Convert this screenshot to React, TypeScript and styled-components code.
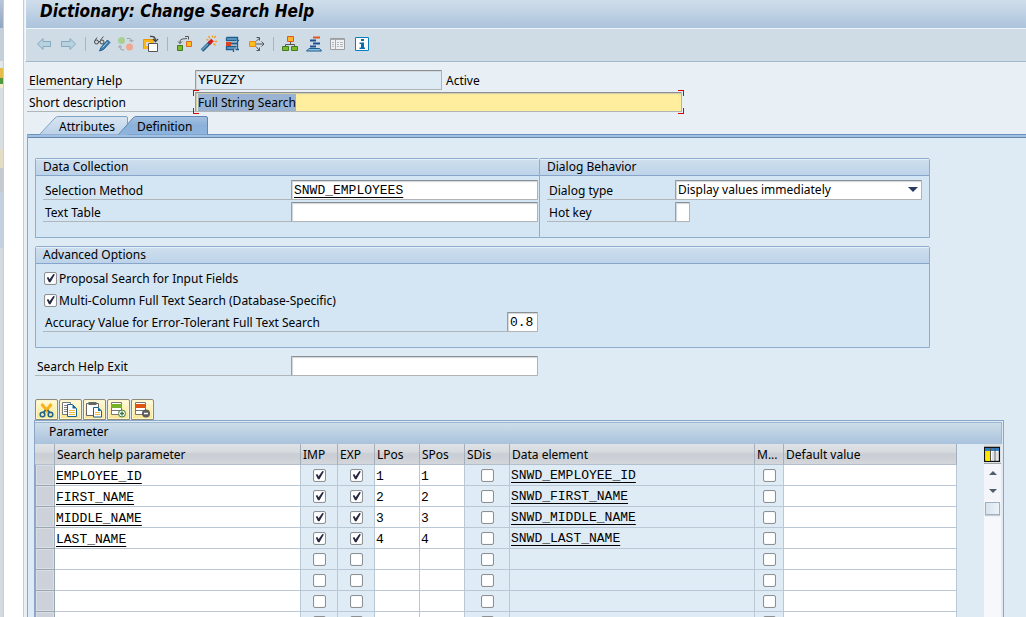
import React, { useEffect, useRef } from "react";
import styled, { createGlobalStyle, css } from "styled-components";

const UI_FONT = '"Noto Sans", "Open Sans", sans-serif';
const MONO_FONT = '"Liberation Mono", "DejaVu Sans Mono", monospace';

const GlobalStyle = createGlobalStyle`
  *, *::before, *::after { box-sizing: border-box; }
  body {
    margin: 0;
    background: #ffffff;
    color: #000000;
    font-family: ${UI_FONT};
    font-size: 12px;
    line-height: 16px;
  }
  button, input, select { font: inherit; color: inherit; }
`;

/* ---------- window frame ---------- */

const Desktop = styled.div`
  display: flex;
  height: 100vh;
  overflow: hidden;
`;

const BackWindow = styled.div`
  flex: 0 0 4px;
  display: flex;
  flex-direction: column;
  background: #d3dae0;
  border-right: 1px solid #c9ced6;
`;

const BackStrip = styled.div<{ $h: number; $bg: string }>`
  flex: 0 0 ${(p) => p.$h}px;
  background: ${(p) => p.$bg};
`;

const Window = styled.div`
  flex: 1;
  min-width: 0;
  display: flex;
  flex-direction: column;
  margin-left: 19px;
  border-left: 1px solid #c6cbd9;
  padding-left: 1px;
  background: #e8eff5;
`;

const TitleBar = styled.header`
  flex: 0 0 29px;
  padding-left: 14px;
  background: linear-gradient(#d0deeb, #abc3dc);
  border-left: 1px solid #f5f9fc;
  border-bottom: 1px solid #eef4f9;
`;

const Title = styled.h1`
  margin: 0;
  font-family: "DejaVu Sans Condensed", "DejaVu Sans", sans-serif;
  font-size: 17px;
  line-height: 22px;
  font-weight: bold;
  font-style: italic;
  white-space: nowrap;
`;

const Toolbar = styled.div`
  flex: 0 0 33px;
  display: flex;
  align-items: center;
  gap: 6px;
  padding: 0 0 3px 10px;
  background: #cfdce6;
  border-left: 1px solid #f5f9fc;
  border-bottom: 1px solid #a3b9c9;
`;

const ToolButton = styled.button`
  width: 18px;
  height: 18px;
  padding: 0;
  border: 0;
  background: none;

  svg { display: block; }
`;

const Separator = styled.span`
  width: 1px;
  height: 14px;
  margin: 0 2px 0 1px;
  background: #9db8cd;
`;

/* ---------- form parts ---------- */

const HeaderForm = styled.div`
  display: flex;
  flex-direction: column;
  gap: 2px;
  padding: 8px 0 4px 2px;
`;

const Row = styled.div<{ $width?: number }>`
  display: flex;
  align-items: stretch;
  height: 20px;
  ${(p) => p.$width && css`width: ${p.$width}px;`}
`;

const Label = styled.label<{ $width?: number }>`
  ${(p) => (p.$width ? css`flex: 0 0 ${p.$width}px;` : css`flex: 1;`)}
  padding: 3px 0 0 2px;
  border-bottom: 1px solid #b0b6ba;
  white-space: nowrap;
`;

const sunken = css`
  border: 1px solid #b0b4b6;
  border-top-color: #8b9094;
  border-left-color: #9a9ea2;
  border-radius: 1px;
  box-shadow: inset 1px 1px 1px #d2d5d8;
`;

const Field = styled.input<{ $width?: number; $mono?: boolean; $link?: boolean }>`
  ${sunken}
  ${(p) => (p.$width ? css`flex: 0 0 ${p.$width}px;` : css`flex: 1;`)}
  min-width: 0;
  width: ${(p) => (p.$width ? `${p.$width}px` : "auto")};
  height: 20px;
  padding: 0 2px;
  background: #ffffff;
  outline: 0;
  ${(p) => p.$mono && css`font-family: ${MONO_FONT}; font-size: 13px;`}
  ${(p) => p.$link && css`text-decoration: underline; text-underline-offset: 3px;`}

  &:read-only { background: #dfebf4; }
`;

const FocusFrame = styled.span`
  position: relative;
  flex: 0 0 487px;
  display: flex;

  input {
    background: #ffee9e;
    box-shadow: inset 1px 1px 1px #cfc9a8;
  }
  input::selection { background: #9ab3d2; color: #000000; }
`;

const Corner = styled.i<{ $v: "top" | "bottom"; $h: "left" | "right" }>`
  position: absolute;
  width: 6px;
  height: 6px;
  ${(p) => p.$v}: -2px;
  ${(p) => p.$h}: -2px;
  border: 0 solid #dd0000;
  border-${(p) => p.$v}-width: 1px;
  border-${(p) => p.$h}-width: 1px;
`;

const Status = styled.span`
  padding: 3px 0 0 4px;
`;

const SelectBox = styled.div`
  position: relative;
  flex: 1;
  display: flex;

  &::after {
    content: "";
    position: absolute;
    right: 4px;
    top: 7px;
    border: 5px solid transparent;
    border-top-color: #2b3c62;
    border-bottom: 0;
    pointer-events: none;
  }
`;

const Select = styled.select`
  ${sunken}
  appearance: none;
  flex: 1;
  height: 20px;
  padding: 0 2px;
  background: #ffffff;
  outline: 0;
`;

const Tick = styled.input.attrs({ type: "checkbox" })`
  appearance: none;
  display: block;
  flex: 0 0 13px;
  width: 13px;
  height: 13px;
  margin: 0;
  border: 1px solid #8e9194;
  border-radius: 2px;
  background: #ffffff;
  box-shadow: inset 0 0 1px #b9bcc0;

  &:checked::before {
    content: "";
    display: block;
    width: 11px;
    height: 11px;
    background: #26293f;
    clip-path: polygon(16% 48%, 30% 42%, 42% 62%, 76% 14%, 90% 18%, 50% 88%, 36% 88%);
  }
`;

const TickLabel = styled.label`
  display: flex;
  align-items: center;
  gap: 2px;
  height: 20px;
  padding-left: 1px;
  white-space: nowrap;
`;

const TickText = styled.span`
  padding-top: 1px;
`;

/* ---------- tabs ---------- */

const TabList = styled.div`
  display: flex;
  height: 18px;
  padding-left: 14px;
`;

const Tab = styled.button<{ $active?: boolean }>`
  position: relative;
  z-index: ${(p) => (p.$active ? 1 : 0)};
  width: 90px;
  height: 19px;
  margin-left: ${(p) => (p.$active ? "-11px" : "0")};
  padding: 2px 0 0 ${(p) => (p.$active ? 19 : 20)}px;
  border: 0;
  background: none;
  text-align: left;
  line-height: 16px;
`;

const TabShape = styled.svg`
  position: absolute;
  inset: 0;
  z-index: -1;
`;

const TabPanel = styled.main`
  flex: 1;
  min-height: 0;
  margin-left: 2px;
  border-left: 1px solid #8aa7c7;
  background: #dfebf4;
`;

const TabEdge = styled.div`
  height: 4px;
  background: #a3c2e3;
  border-top: 1px solid #6a92bf;
  border-bottom: 1px solid #6487b0;
`;

const PanelBody = styled.div`
  display: flex;
  flex-direction: column;
  padding: 20px 22px 0 7px;
`;

/* ---------- group boxes ---------- */

const GroupRow = styled.div`
  display: grid;
  grid-template-columns: 504px 1fr;
  margin: 0 74px 8px 0;
`;

const Group = styled.section<{ $open?: boolean; $wide?: boolean }>`
  ${(p) => p.$wide && css`grid-column: 1 / -1;`}
  border: 1px solid #8eadcd;
  border-right-width: ${(p) => (p.$open ? 0 : 1)}px;
  border-radius: 2px 2px 0 0;
  background: #d4e5f3;
`;

const GroupTitle = styled.h2`
  height: 17px;
  margin: 0;
  padding-left: 7px;
  font-size: 12px;
  font-weight: normal;
  line-height: 16px;
  background: linear-gradient(#cfdfee, #bdd3e9);
  border-bottom: 1px solid #86a5c8;
  box-shadow: inset 0 1px 0 #e4eef7;
`;

const GroupBody = styled.div`
  display: flex;
  flex-direction: column;
  gap: 2px;
  padding: 4px 7px 15px;
`;

/* ---------- parameter table ---------- */

const GridTools = styled.div`
  display: flex;
  gap: 1px;
  margin-top: 23px;
`;

const GridButton = styled.button`
  width: 23px;
  height: 21px;
  padding: 0 0 0 2px;
  border: 1px solid #8d8a78;
  border-radius: 2px 2px 0 0;
  background: linear-gradient(#fffbe0, #fdf0b0 50%, #f8e38e);
  box-shadow: inset 0 0 0 1px #fff6cc;

  svg { display: block; }
`;

const GridFrame = styled.section`
  margin-left: -1px;
  padding: 1px 1px 0 0;
  border: 1px solid #89a6c9;
  border-bottom: 0;
`;

const GridTitle = styled.h2`
  height: 22px;
  margin: 0;
  padding-left: 14px;
  font-size: 12px;
  font-weight: normal;
  line-height: 18px;
  border: 1px solid #9db6d0;
  border-width: 1px 1px 0 0;
  background: linear-gradient(#cddde9, #a9c2dc);
`;

const GridBody = styled.div`
  display: flex;
`;

const Table = styled.table`
  flex: 1;
  min-width: 0;
  margin-right: 27px;
  table-layout: fixed;
  border-collapse: separate;
  border-spacing: 0;
`;

const HeadCell = styled.th`
  height: 21px;
  padding: 2px 0 0 2px;
  overflow: hidden;
  border-right: 1px solid #a3afbd;
  border-bottom: 1px solid #b3bfcc;
  background: linear-gradient(#dfe3e6, #d6dade 40%, #c9cdd4 50%, #d3d7db);
  font-weight: normal;
  text-align: left;
  white-space: nowrap;
`;

const Cell = styled.td<{ $white?: boolean }>`
  height: 21px;
  padding: 0 0 0 1px;
  overflow: hidden;
  border-right: 1px solid #bac7d5;
  border-bottom: 1px solid #bac7d5;
  background: ${(p) => (p.$white ? "#ffffff" : "#dfebf5")};
  font-family: ${MONO_FONT};
  font-size: 13px;
  line-height: 18px;
  white-space: nowrap;

  ${Tick} { margin: 0 auto; }
`;

const SelectorCell = styled.td`
  height: 21px;
  padding: 0;
  border: 1px solid #9ba6b3;
  border-width: 0 1px 1px 1px;
  background: #cdd1d9;
  box-shadow: inset 0 0 0 1px #dadee3;
`;

const CellInput = styled.input<{ $link?: boolean }>`
  display: block;
  width: 100%;
  height: 20px;
  padding: 2px 0 0;
  border: 0;
  outline: 0;
  background: transparent;
  text-decoration: ${(p) => (p.$link ? "underline" : "none")};
  text-underline-offset: 3px;
`;

const CellLink = styled.a`
  display: block;
  height: 20px;
  padding-top: 2px;
  color: inherit;
  text-underline-offset: 3px;
`;

const ScrollColumn = styled.div`
  flex: 0 0 18px;
  display: flex;
  flex-direction: column;
  background: #f6f8fb;
  border-right: 1px solid #e6ebf1;
`;

const SettingsButton = styled.button`
  height: 20px;
  padding: 1px 0 0 0;
  border: 0;
  border-bottom: 1px solid #9fa5ab;
  background: #dcdfe2;

  svg { display: block; }
`;

const ScrollArrow = styled.button<{ $up?: boolean }>`
  display: flex;
  justify-content: center;
  align-items: center;
  height: 18px;
  padding: 0;
  border: 0;
  background: #f3f5fa;

  &::before {
    content: "";
    border: 4px solid transparent;
    ${(p) =>
      p.$up
        ? css`border-top: 0; border-bottom-color: #4e5e6b;`
        : css`border-bottom: 0; border-top-color: #4e5e6b;`}
  }
`;

const Thumb = styled.div`
  width: 15px;
  height: 13px;
  margin: 2px 0 0 1px;
  border: 1px solid #9fb0c2;
  background: linear-gradient(90deg, #d7e3ee, #edf3f8);
  box-shadow: 0 1px 1px #c5ccd4;
`;

/* ---------- icons ---------- */

const Icon = ({ children, size = 18 }: { children: React.ReactNode; size?: number }) => (
  <svg width={size} height={size} viewBox={`0 0 ${size} ${size}`} fill="none" aria-hidden="true">
    {children}
  </svg>
);

const toolIcons: Record<string, React.ReactNode> = {
  Back: <path d="M1.5 9 L7 3.5 V6.5 H14.5 V11.5 H7 V14.5 Z" fill="#b9d2e0" stroke="#84a9c0" />,
  Forward: <path d="M15.5 9 L10 3.5 V6.5 H1.5 V11.5 H10 V14.5 Z" fill="#b9d2e0" stroke="#84a9c0" />,
  "Display/Change": (
    <>
      <circle cx="2.5" cy="7" r="2" stroke="#444" />
      <circle cx="8" cy="7" r="2" stroke="#444" />
      <path d="M1 5.5 L3 2.5 M6.500 5 L9.500 1.500 M4.5 6.5 H6" stroke="#555" />
      <path d="M7 12.500 L13.500 5 L16 7.500 L9.500 14.500 L5.500 16 Z" fill="#3f7fae" stroke="#245f8f" />
      <path d="M8.500 12.500 L13.500 7" stroke="#a9d0ea" />
    </>
  ),
  "Active/Inactive": (
    <>
      <circle cx="3.5" cy="5.500" r="3.5" fill="#a9cf92" />
      <circle cx="11.5" cy="12" r="3.5" fill="#efa78f" />
      <path d="M9 3.5 H11.5 Q13.5 3.5 13.5 6.5 M11.5 5 L13.500 7 L15.500 5 M2 11 V13 Q2 15 6 15 M0.5 12.5 L2 10.5 L3.500 12.500" stroke="#9a9fa2" />
    </>
  ),
  "Other Object": (
    <>
      <path d="M1 4 H12 V14 H1 Z" fill="#fbb616" />
      <path d="M4 7 H8 V11 H4 Z" fill="#cfdce6" />
      <path d="M1.500 13.500 V4.500 H11.500" stroke="#e89a00" />
      <path d="M6.500 8.500 H15.500 V16.500 H6.500 Z" fill="#fff" stroke="#555" />
      <path d="M8 1.500 Q13.500 0.500 13.500 6 M11 4 L13.500 6.500 L16 4" stroke="#444" strokeWidth="1.300" />
    </>
  ),
  Activate: (
    <>
      <path d="M1.500 10.500 H6.500 V15.500 H1.500 Z" fill="#7fb927" stroke="#3e7d22" />
      <path d="M10.500 6.500 H15.500 V11.500 H10.500 Z" fill="#fcbc1c" stroke="#e0691f" />
      <path d="M4 8.500 V5.500 Q5 3.500 11 3.500 M2 6.500 L4 8.500 L6 6.500 M9 1.500 H12.500 V4.500" stroke="#555" />
    </>
  ),
  Check: (
    <>
      <path d="M2 15.500 L10.500 7" stroke="#25587f" strokeWidth="3.600" />
      <path d="M2 15 L8 9" stroke="#67a7d0" strokeWidth="1.500" />
      <path d="M9 8.500 L12.500 5" stroke="#d7191c" strokeWidth="3.600" />
      <path d="M8.500 1 L10 3.500 M12.500 0.500 V2.500 M16 1 L14 3 M14.500 6.500 H17 M13.500 8.500 L15.500 10.500 M6.500 4.500 L8.500 5" stroke="#f59a1b" strokeWidth="1.300" />
    </>
  ),
  "Where-Used List": (
    <>
      <path d="M3 3 H14 V5 H3 Z M3 12 H12 V14 H3 Z" fill="#6ea6cc" />
      <path d="M2.500 2.500 H13.500 V14.500 M2.500 2.500 V5.500 H12.500 M15 5.500 H13 M12.500 11.500 H2.500 V14.500 H9.500 V17 M11.500 14.500 H15" stroke="#1f5e8c" strokeWidth="1.300" />
      <path d="M2 7 H7 V11 H2 Z" fill="#d9441f" />
      <path d="M7 8.500 H13" stroke="#1f5e8c" strokeWidth="2" />
    </>
  ),
  "Display Object List": (
    <>
      <path d="M1.500 6.500 H7.500 V11.500 H1.500 Z" fill="#fcbc1c" stroke="#ee8a1c" />
      <path d="M8 9 H16 M8 6.500 L11.500 3 M8 11.500 L11.500 15.500 M13.500 6.500 L16 9 L13.500 11.500 M8.500 2.500 H11.500 V5.500 M8.500 15.500 H11.500 V12.500" stroke="#555" />
    </>
  ),
  Hierarchy: (
    <>
      <path d="M5.500 1.500 H11.500 V6.500 H5.500 Z" fill="#fcb52a" stroke="#df5b1d" />
      <path d="M8.500 7 V9.500 M3.500 11 V9.500 H12.500 V11" stroke="#555" />
      <path d="M0.500 11.500 H6.500 V15.500 H0.500 Z M9.500 11.500 H15.500 V15.500 H9.500 Z" fill="#7fb927" stroke="#3e7d22" />
    </>
  ),
  "Technical Settings": (
    <>
      <path d="M7 2.500 H14" stroke="#dd5a1d" strokeWidth="2" />
      <path d="M4 5.500 H10 M7 8.500 H14 M4 11.500 H10" stroke="#1d4f8f" strokeWidth="2" />
      <path d="M3 13.500 H13.500 L15.500 16 H0.500 Z" fill="#8fc0e2" stroke="#1b5c8e" />
    </>
  ),
  "Display Contents": (
    <>
      <path d="M0.500 3.500 H14.500 V14.500 H0.500 Z" fill="#eef0f2" stroke="#9a9ea2" />
      <path d="M1 4.500 H14 M5.500 5 V14" stroke="#a6aaad" />
      <path d="M2 7.500 H4 M2 9.500 H4 M2 11.500 H4 M7 7.500 H9 M10 7.500 H13 M7 9.500 H9 M10 9.500 H13 M7 11.500 H9 M10 11.500 H13" stroke="#b4b8bb" />
    </>
  ),
  Information: (
    <>
      <path d="M1.500 2.500 H14.500 V15.500 H1.500 Z" fill="#fff" stroke="#0a7fc0" />
      <path d="M7 4 H10 V6 H7 Z M5.500 7.500 H10 V12.500 H11 V14 H5.500 V12.500 H7 V9 H5.500 Z" fill="#0a6ca8" />
    </>
  ),
};

const gridIcons: Record<string, React.ReactNode> = {
  Cut: (
    <>
      <path d="M3.500 3 L10.500 11 M13.500 3 L7 11" stroke="#f8b318" strokeWidth="3" />
      <path d="M7.500 9 L5 12 M9.500 9 L12.500 12" stroke="#1c6394" strokeWidth="1.500" />
      <circle cx="4.500" cy="13.500" r="2.300" stroke="#1c6394" strokeWidth="1.500" />
      <circle cx="12.500" cy="13.500" r="2.300" stroke="#1c6394" strokeWidth="1.500" />
    </>
  ),
  Copy: (
    <>
      <path d="M0.500 1.500 H8.500 V13.500 H0.500 Z" fill="#fff" stroke="#777" />
      <path d="M2 4.500 H5 M2 6.500 H5 M2 8.500 H5 M2 10.500 H5" stroke="#888" />
      <path d="M5.500 3.500 H10.500 L14.500 7.500 V15.500 H5.500 Z" fill="#fff" stroke="#12659c" />
      <path d="M10.500 3.500 V7.500 H14.500 Z" fill="#12659c" />
      <path d="M7 9.500 H13 M7 11.500 H13 M7 13.500 H13" stroke="#f0b93a" />
    </>
  ),
  Paste: (
    <>
      <path d="M0.500 2.500 H12.500 V14.500 H0.500 Z" fill="#fff" stroke="#666" />
      <path d="M2.500 1 H10.500 V4 H2.500 Z" fill="#666" />
      <path d="M7.500 6.500 H12 L15.500 10 V16 H7.500 Z" fill="#fff" stroke="#12659c" />
      <path d="M12 6.500 V10 H15.500 Z" fill="#12659c" />
      <path d="M9 11.500 H14 M9 13.500 H14" stroke="#f0b93a" />
    </>
  ),
  "Insert Row": (
    <>
      <path d="M1.500 1.500 H11.500 V13.500 H1.500 Z" fill="#fff" stroke="#777" />
      <path d="M1 3 H12 V7 H1 Z" fill="#72b32a" />
      <path d="M1 9.500 H10" stroke="#777" />
      <circle cx="12" cy="12.500" r="3.500" fill="#fff" stroke="#3c7a3e" />
      <path d="M10 12.500 H14 M12 10.500 V14.500" stroke="#3c7a3e" strokeWidth="1.500" />
    </>
  ),
  "Delete Row": (
    <>
      <path d="M1.500 1.500 H11.500 V13.500 H1.500 Z" fill="#fff" stroke="#777" />
      <path d="M1 3 H12 V7 H1 Z" fill="#dd5417" />
      <path d="M1 9.500 H10" stroke="#777" />
      <circle cx="12" cy="12.500" r="4" fill="#5d5d5d" />
      <path d="M10 12.500 H14" stroke="#fff" strokeWidth="1.500" />
    </>
  ),
};

const toolGroups = [
  ["Back", "Forward"],
  ["Display/Change", "Active/Inactive", "Other Object"],
  ["Activate", "Check", "Where-Used List", "Display Object List"],
  ["Hierarchy", "Technical Settings", "Display Contents", "Information"],
];

/* ---------- data ---------- */

const columns = [
  { title: "Search help parameter", width: 246 },
  { title: "IMP", width: 37 },
  { title: "EXP", width: 37 },
  { title: "LPos", width: 45 },
  { title: "SPos", width: 45 },
  { title: "SDis", width: 45 },
  { title: "Data element", width: 245 },
  { title: "M...", width: 29 },
  { title: "Default value", width: undefined },
];

const parameters = [
  { name: "EMPLOYEE_ID", pos: "1", element: "SNWD_EMPLOYEE_ID" },
  { name: "FIRST_NAME", pos: "2", element: "SNWD_FIRST_NAME" },
  { name: "MIDDLE_NAME", pos: "3", element: "SNWD_MIDDLE_NAME" },
  { name: "LAST_NAME", pos: "4", element: "SNWD_LAST_NAME" },
];

const ROW_COUNT = 8;

function ParameterRow({ index }: { index: number }) {
  const p = parameters[index];
  const n = index + 1;
  return (
    <tr>
      <SelectorCell />
      <Cell $white>
        <CellInput $link aria-label={`Parameter ${n}`} defaultValue={p?.name} />
      </Cell>
      <Cell><Tick aria-label={`Import ${n}`} defaultChecked={!!p} /></Cell>
      <Cell><Tick aria-label={`Export ${n}`} defaultChecked={!!p} /></Cell>
      <Cell $white><CellInput aria-label={`LPos ${n}`} defaultValue={p?.pos} /></Cell>
      <Cell $white><CellInput aria-label={`SPos ${n}`} defaultValue={p?.pos} /></Cell>
      <Cell><Tick aria-label={`SDis ${n}`} /></Cell>
      <Cell>{p && <CellLink href="#">{p.element}</CellLink>}</Cell>
      <Cell><Tick aria-label={`Modified ${n}`} /></Cell>
      <Cell $white><CellInput aria-label={`Default value ${n}`} /></Cell>
    </tr>
  );
}

export default function App() {
  const description = useRef<HTMLInputElement>(null);

  useEffect(() => {
    description.current?.focus();
    description.current?.select();
  }, []);

  return (
    <>
      <GlobalStyle />
      <Desktop>
        <BackWindow aria-hidden="true">
          <BackStrip $h={28} $bg="linear-gradient(#b9c6d8, #8fa6c2)" />
          <BackStrip $h={33} $bg="#c3d0da" />
          <BackStrip $h={7} $bg="#e0e6ea" />
          <BackStrip $h={10} $bg="#e3bd4c" />
          <BackStrip $h={6} $bg="#4f9a3c" />
          <BackStrip $h={4} $bg="#f3ebcb" />
          <BackStrip $h={61} $bg="#d8dfe3" />
          <BackStrip $h={19} $bg="#e2ddc4" />
          <BackStrip $h={24} $bg="#c5cad0" />
          <BackStrip $h={56} $bg="#c2d0e0" />
        </BackWindow>

        <Window>
          <TitleBar>
            <Title>Dictionary: Change Search Help</Title>
          </TitleBar>

          <Toolbar role="toolbar" aria-label="Application toolbar">
            {toolGroups.map((group, g) => (
              <React.Fragment key={group[0]}>
                {g > 0 && <Separator />}
                {group.map((name) => (
                  <ToolButton key={name} type="button" aria-label={name}>
                    <Icon>{toolIcons[name]}</Icon>
                  </ToolButton>
                ))}
              </React.Fragment>
            ))}
          </Toolbar>

          <HeaderForm>
            <Row>
              <Label $width={168} htmlFor="help-name">Elementary Help</Label>
              <Field $width={247} $mono id="help-name" defaultValue="YFUZZY" readOnly />
              <Status>Active</Status>
            </Row>
            <Row>
              <Label $width={168} htmlFor="help-text">Short description</Label>
              <FocusFrame>
                <Field id="help-text" ref={description} defaultValue="Full String Search" />
                <Corner $v="top" $h="left" />
                <Corner $v="top" $h="right" />
                <Corner $v="bottom" $h="left" />
                <Corner $v="bottom" $h="right" />
              </FocusFrame>
            </Row>
          </HeaderForm>

          <TabList role="tablist">
            <Tab type="button" role="tab" aria-selected="false">
              <TabShape width="90" height="19" viewBox="0 0 90 19" aria-hidden="true">
                <defs>
                  <linearGradient id="tab-idle" x1="0" y1="0" x2="0" y2="1">
                    <stop offset="0" stopColor="#d8e5f1" />
                    <stop offset="1" stopColor="#bcd2e8" />
                  </linearGradient>
                </defs>
                <path d="M0.500 18.500 L16 2 Q17.500 0.500 19 0.500 H87 Q88.500 0.500 88.500 2 V18.500" fill="url(#tab-idle)" stroke="#7fa1c4" />
              </TabShape>
              Attributes
            </Tab>
            <Tab type="button" role="tab" aria-selected="true" $active>
              <TabShape width="90" height="19" viewBox="0 0 90 19" aria-hidden="true">
                <defs>
                  <linearGradient id="tab-active" x1="0" y1="0" x2="0" y2="1">
                    <stop offset="0" stopColor="#a5c1e0" />
                    <stop offset="0.500" stopColor="#8bb0da" />
                    <stop offset="1" stopColor="#8fb4dd" />
                  </linearGradient>
                </defs>
                <path d="M0.500 18.500 L15 2 Q16.500 0.500 18 0.500 H88 Q89.500 0.500 89.500 2 V18.500" fill="url(#tab-active)" stroke="#5f88b6" />
              </TabShape>
              Definition
            </Tab>
          </TabList>

          <TabPanel role="tabpanel">
            <TabEdge />
            <PanelBody>
              <GroupRow>
                <Group $open>
                  <GroupTitle>Data Collection</GroupTitle>
                  <GroupBody>
                    <Row $width={495}>
                      <Label $width={248} htmlFor="method">Selection Method</Label>
                      <Field $width={247} $mono $link id="method" defaultValue="SNWD_EMPLOYEES" />
                    </Row>
                    <Row $width={495}>
                      <Label $width={248} htmlFor="text-table">Text Table</Label>
                      <Field $width={247} $mono id="text-table" />
                    </Row>
                  </GroupBody>
                </Group>
                <Group>
                  <GroupTitle>Dialog Behavior</GroupTitle>
                  <GroupBody>
                    <Row>
                      <Label $width={128} htmlFor="dialog-type">Dialog type</Label>
                      <SelectBox>
                        <Select id="dialog-type">
                          <option>Display values immediately</option>
                        </Select>
                      </SelectBox>
                    </Row>
                    <Row>
                      <Label $width={128} htmlFor="hot-key">Hot key</Label>
                      <Field $width={15} $mono id="hot-key" />
                    </Row>
                  </GroupBody>
                </Group>
              </GroupRow>

              <GroupRow>
                <Group $wide>
                  <GroupTitle>Advanced Options</GroupTitle>
                  <GroupBody>
                    <TickLabel>
                      <Tick defaultChecked />
                      <TickText>Proposal Search for Input Fields</TickText>
                    </TickLabel>
                    <TickLabel>
                      <Tick defaultChecked />
                      <TickText>Multi-Column Full Text Search (Database-Specific)</TickText>
                    </TickLabel>
                    <Row $width={495}>
                      <Label htmlFor="accuracy">Accuracy Value for Error-Tolerant Full Text Search</Label>
                      <Field $width={31} $mono id="accuracy" defaultValue="0.8" />
                    </Row>
                  </GroupBody>
                </Group>
              </GroupRow>

              <Row>
                <Label $width={256} htmlFor="exit">Search Help Exit</Label>
                <Field $width={247} $mono id="exit" />
              </Row>

              <GridTools role="toolbar" aria-label="Parameter toolbar">
                {Object.keys(gridIcons).map((name) => (
                  <GridButton key={name} type="button" aria-label={name}>
                    <Icon>{gridIcons[name]}</Icon>
                  </GridButton>
                ))}
              </GridTools>

              <GridFrame>
                <GridTitle>Parameter</GridTitle>
                <GridBody>
                  <Table>
                    <colgroup>
                      <col width={20} />
                      {columns.map((c) => (
                        <col key={c.title} width={c.width} />
                      ))}
                    </colgroup>
                    <thead>
                      <tr>
                        <HeadCell aria-label="Select row" />
                        {columns.map((c) => (
                          <HeadCell key={c.title} scope="col">{c.title}</HeadCell>
                        ))}
                      </tr>
                    </thead>
                    <tbody>
                      {Array.from({ length: ROW_COUNT }, (_, i) => (
                        <ParameterRow key={i} index={i} />
                      ))}
                    </tbody>
                  </Table>
                  <ScrollColumn>
                    <SettingsButton type="button" aria-label="Table settings">
                      <Icon size={16}>
                        <path d="M0.500 1.500 H15.500 V15.500 H0.500 Z" fill="#fff" stroke="#111" strokeWidth="1.500" />
                        <path d="M1 2 H15 V5 H1 Z" fill="#2f7cc0" />
                        <path d="M2 5 H6 V15 H2 Z" fill="#ffe600" />
                        <path d="M6.500 2 V15 M11 2 V15" stroke="#555" />
                        <path d="M8 6 H10 V14 H8 Z M12 6 H14 V14 H12 Z" fill="#dfe3e8" />
                      </Icon>
                    </SettingsButton>
                    <ScrollArrow $up type="button" aria-label="Scroll up" />
                    <ScrollArrow type="button" aria-label="Scroll down" />
                    <Thumb />
                  </ScrollColumn>
                </GridBody>
              </GridFrame>
            </PanelBody>
          </TabPanel>
        </Window>
      </Desktop>
    </>
  );
}
